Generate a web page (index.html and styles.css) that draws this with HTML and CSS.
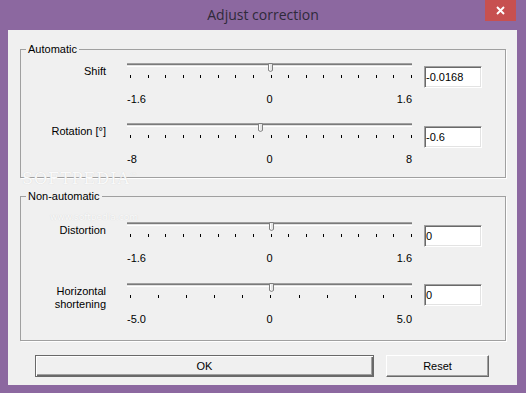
FILE: index.html
```html
<!DOCTYPE html>
<html lang="en">
<head>
  <meta charset="UTF-8">
  <title>Adjust correction</title>
  <link rel="stylesheet" href="styles.css">
</head>
<body>
  <div class="window">
    <div class="titlebar">
      <h1 class="title">Adjust correction</h1>
      <button class="close" type="button" aria-label="Close">
        <svg width="9" height="9" viewBox="0 0 9 9"><path d="M1 1L8 8M8 1L1 8" stroke="#fff" stroke-width="1.9"/></svg>
      </button>
    </div>

    <div class="client">
      <fieldset class="group">
        <legend>Automatic</legend>
        <div class="row">
          <div class="label">Shift</div>
          <div class="slider">
            <div class="rail">
              <div class="track"></div>
              <div class="range"><span class="thumb" style="left: 49.5%"></span></div>
            </div>
            <div class="ticks"><span></span><span></span><span></span><span></span><span></span><span></span><span></span><span></span><span></span><span></span><span></span><span></span><span></span><span></span><span></span><span></span><span></span></div>
            <div class="scale"><span>-1.6</span><span>0</span><span>1.6</span></div>
          </div>
          <input class="value" type="text" value="-0.0168">
        </div>
        <div class="row">
          <div class="label">Rotation [°]</div>
          <div class="slider">
            <div class="rail">
              <div class="track"></div>
              <div class="range"><span class="thumb" style="left: 46.25%"></span></div>
            </div>
            <div class="ticks"><span></span><span></span><span></span><span></span><span></span><span></span><span></span><span></span><span></span><span></span><span></span><span></span><span></span><span></span><span></span><span></span><span></span></div>
            <div class="scale"><span>-8</span><span>0</span><span>8</span></div>
          </div>
          <input class="value" type="text" value="-0.6">
        </div>
      </fieldset>

      <fieldset class="group group-manual">
        <legend>Non-automatic</legend>
        <div class="row">
          <div class="label">Distortion</div>
          <div class="slider">
            <div class="rail">
              <div class="track"></div>
              <div class="range"><span class="thumb" style="left: 50%"></span></div>
            </div>
            <div class="ticks"><span></span><span></span><span></span><span></span><span></span><span></span><span></span><span></span><span></span><span></span><span></span><span></span><span></span><span></span><span></span><span></span><span></span></div>
            <div class="scale"><span>-1.6</span><span>0</span><span>1.6</span></div>
          </div>
          <input class="value" type="text" value="0">
        </div>
        <div class="row">
          <div class="label">Horizontal shortening</div>
          <div class="slider">
            <div class="rail">
              <div class="track"></div>
              <div class="range"><span class="thumb" style="left: 50%"></span></div>
            </div>
            <div class="ticks"><span></span><span></span><span></span><span></span><span></span><span></span><span></span><span></span><span></span><span></span><span></span></div>
            <div class="scale"><span>-5.0</span><span>0</span><span>5.0</span></div>
          </div>
          <input class="value value-low" type="text" value="0">
        </div>
      </fieldset>

      <div class="buttons">
        <button class="btn btn-ok" type="button">OK</button>
        <button class="btn btn-reset" type="button">Reset</button>
      </div>

      <div class="watermark">
        <div class="wm-logo">SOFTPEDIA<sup>™</sup></div>
        <div class="wm-url">www.softpedia.com</div>
      </div>
    </div>
  </div>
</body>
</html>
```

FILE: styles.css
```css
body {
  margin: 0;
  font-family: "Liberation Sans", Arial, sans-serif;
  font-size: 11px;
  color: #000;
}
.window {
  width: 526px;
  height: 393px;
  background: #8c68a0;
  display: flex;
  flex-direction: column;
}
.titlebar {
  height: 30px;
  flex-shrink: 0;
  display: grid;
  grid-template-columns: 1fr auto 1fr;
}
.title {
  grid-column: 2;
  margin: 0;
  font: normal 14px/30px "Open Sans", sans-serif;
  color: #2f2a3a;
}
.close {
  grid-column: 3;
  justify-self: end;
  align-self: start;
  width: 31px;
  height: 21px;
  margin-right: 10px;
  padding: 0;
  border: none;
  background: #c75050;
  display: flex;
  align-items: center;
  justify-content: center;
}
.client {
  position: relative;
  flex: 1;
  margin: 0 9px 8px 8px;
  padding: 13px 11px 0 12px;
  background: #f0f0f0;
}

/* group boxes */
.group {
  margin: 0;
  padding: 6px 0 11px;
  border: 1px solid #a0a0a0;
  box-shadow: 1px 1px 0 #fff;
  display: flex;
  flex-direction: column;
  gap: 16px;
}
.group legend {
  margin-left: 5px;
  padding: 0 2px;
  line-height: 13px;
}
.group-manual {
  margin-top: 12px;
  padding-top: 18px;
  padding-bottom: 14px;
  gap: 17px;
}

/* one slider row */
.row {
  display: flex;
  align-items: flex-start;
}
.label {
  width: 85px;
  margin: 3px 21px 0 0;
  text-align: right;
  line-height: 13px;
}
.slider {
  width: 285px;
}
.rail {
  position: relative;
  height: 10px;
}
.track {
  margin-top: 1px;
  height: 4px;
  background: linear-gradient(#a0a0a0 0 1px, #7a7a7a 1px 2px, #e3e3e3 2px 3px, #fff 3px 4px);
}
.range {
  position: absolute;
  top: 0;
  bottom: 0;
  left: 3px;
  right: 0;
}
.thumb {
  position: absolute;
  top: 0;
  width: 5px;
  height: 9px;
  margin-left: -2px;
  background: url("data:image/svg+xml,%3Csvg xmlns='http://www.w3.org/2000/svg' width='5' height='9'%3E%3Cpath d='M0.5 0.5H4.5V7.5L2.5 8.5L0.5 7.5Z' fill='%23e6e6e6' stroke='%23808080'/%3E%3Cpath d='M1.5 1.5V7' stroke='%23fff'/%3E%3C/svg%3E") no-repeat;
}
.ticks {
  display: flex;
  justify-content: space-between;
  height: 3px;
  margin: 2px 0 0 3px;
}
.ticks span {
  width: 1px;
  background: #000;
}
.scale {
  display: grid;
  grid-template-columns: 1fr auto 1fr;
  margin-top: 15px;
  line-height: 13px;
}
.scale span:last-child {
  text-align: right;
}
.value {
  width: 58px;
  height: 22px;
  margin: 4px 0 0 12px;
  box-sizing: border-box;
  padding: 0 1px;
  border: 1px solid;
  border-color: #a0a0a0 #fff #fff #a0a0a0;
  box-shadow: inset 1px 1px #696969, inset -1px -1px #e3e3e3;
  background: #fff;
  font: 11px "Liberation Sans", Arial, sans-serif;
  color: #000;
}
.value-low {
  margin-top: 2px;
}

/* dialog buttons */
.buttons {
  display: flex;
  gap: 12px;
  margin: 14px 0 0 15px;
}
.btn {
  height: 22px;
  padding: 0;
  background: #f0f0f0;
  border: 1px solid;
  border-color: #fff #696969 #696969 #fff;
  box-shadow: inset -1px -1px #a0a0a0;
  font: 11px "Liberation Sans", Arial, sans-serif;
  color: #000;
}
.btn-ok {
  width: 339px;
  border-color: #696969;
  box-shadow: inset 1px 1px #fff, inset -1px -1px #696969, inset -2px -2px #a0a0a0;
}
.btn-reset {
  width: 103px;
}

/* faint watermark over the dialog */
.watermark {
  position: absolute;
  left: 14px;
  top: 142px;
  pointer-events: none;
  color: #fafafa;
  text-shadow: 0 0 1px #d0d0d0;
}
.wm-logo {
  font: 16px/14px "DejaVu Serif", serif;
  letter-spacing: 1px;
}
.wm-logo sup {
  font-size: 7px;
  line-height: 0;
}
.wm-url {
  margin: 26px 0 0 28px;
  font: 9px/11px "DejaVu Sans", sans-serif;
}
```
